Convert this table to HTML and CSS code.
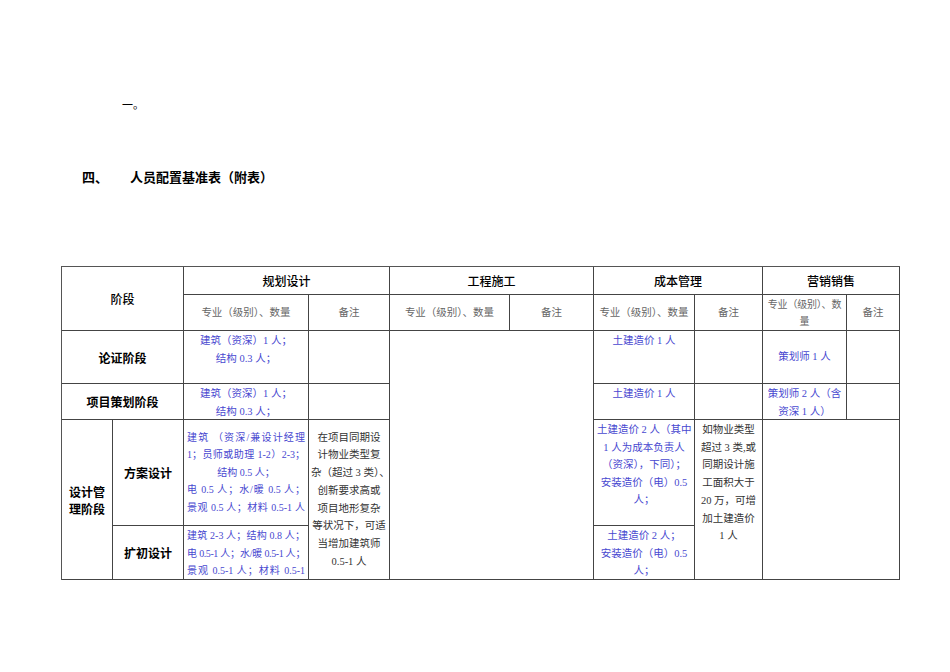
FILE: index.html
```html
<!DOCTYPE html>
<html lang="zh-CN">
<head>
<meta charset="utf-8">
<link rel="stylesheet" href="styles.css">
</head>
<body>
<div class="page">
  <p class="frag">一。</p>
  <h2 class="title"><span class="num">四、</span><span>人员配置基准表（附表）</span></h2>
  <div class="grid">
    <div class="c hd stage">阶段</div>
    <div class="c hd g2">规划设计</div>
    <div class="c hd g2">工程施工</div>
    <div class="c hd g2">成本管理</div>
    <div class="c hd g2">营销销售</div>

    <div class="c sub">专业（级别）、数量</div>
    <div class="c sub">备注</div>
    <div class="c sub">专业（级别）、数量</div>
    <div class="c sub">备注</div>
    <div class="c sub">专业（级别）、数量</div>
    <div class="c sub">备注</div>
    <div class="c sub narrow"><span class="nw">专业（级别）、数</span><span>量</span></div>
    <div class="c sub">备注</div>

    <div class="c hd lab g2">论证阶段</div>
    <div class="c bl top"><div class="ln">建筑（资深）1 人；</div><div class="ln">结构 0.3 人；</div></div>
    <div class="c"></div>
    <div class="c eng"></div>
    <div class="c bl top"><div class="ln">土建造价 1 人</div></div>
    <div class="c"></div>
    <div class="c bl mid"><div class="ln">策划师 1 人</div></div>
    <div class="c"></div>

    <div class="c hd lab g2">项目策划阶段</div>
    <div class="c bl top"><div class="ln">建筑（资深）1 人；</div><div class="ln">结构 0.3 人；</div></div>
    <div class="c"></div>
    <div class="c bl top"><div class="ln">土建造价 1 人</div></div>
    <div class="c"></div>
    <div class="c bl top"><div class="ln">策划师 2 人（含</div><div class="ln">资深 1 人）</div></div>
    <div class="c"></div>

    <div class="c hd lab dm">设计管<br>理阶段</div>
    <div class="c hd lab">方案设计</div>
    <div class="c bl mid fa">
      <div class="ln j">建筑 （资深/兼设计经理</div>
      <div class="ln j">1；员师或助理 1-2）2-3；</div>
      <div class="ln">结构 0.5 人；</div>
      <div class="ln j">电 0.5 人；水/暖 0.5 人；</div>
      <div class="ln j">景观 0.5 人；材料 0.5-1 人</div>
    </div>
    <div class="c note mid r2">
      <div class="ln">在项目同期设</div>
      <div class="ln">计物业类型复</div>
      <div class="ln">杂（超过 3 类）、</div>
      <div class="ln">创新要求高或</div>
      <div class="ln">项目地形复杂</div>
      <div class="ln">等状况下，可适</div>
      <div class="ln">当增加建筑师</div>
      <div class="ln">0.5-1 人</div>
    </div>
    <div class="c bl top">
      <div class="ln">土建造价 2 人（其中</div>
      <div class="ln">1 人为成本负责人</div>
      <div class="ln">（资深），下同）；</div>
      <div class="ln">安装造价（电）0.5</div>
      <div class="ln">人；</div>
    </div>
    <div class="c note top r2">
      <div class="ln">如物业类型</div>
      <div class="ln">超过 3 类,或</div>
      <div class="ln">同期设计施</div>
      <div class="ln">工面积大于</div>
      <div class="ln">20 万，可增</div>
      <div class="ln">加土建造价</div>
      <div class="ln">1 人</div>
    </div>
    <div class="c mk"></div>

    <div class="c hd lab">扩初设计</div>
    <div class="c bl top fa">
      <div class="ln j">建筑 2-3 人；结构 0.8 人；</div>
      <div class="ln j tight">电 0.5-1 人；水/暖 0.5-1 人；</div>
      <div class="ln j">景观 0.5-1 人；材料 0.5-1</div>
    </div>
    <div class="c bl top">
      <div class="ln">土建造价 2 人；</div>
      <div class="ln">安装造价（电）0.5</div>
      <div class="ln">人；</div>
    </div>
  </div>
</div>
</body>
</html>
```

FILE: styles.css
```css
html, body {
  margin: 0;
  padding: 0;
  background: #fff;
}

.page {
  padding: 96px 0 0 61px;
  font-family: "Liberation Serif", "Noto Sans CJK SC", serif;
  color: #000;
}

.frag {
  margin: 0 0 0 61px;
  font-size: 11px;
  line-height: 18px;
}

.title {
  margin: 54px 0 0 21px;
  display: flex;
  font-family: "Noto Sans CJK SC", sans-serif;
  font-size: 13px;
  font-weight: 700;
  line-height: 18px;
}

.title .num {
  width: 48px;
}

.grid {
  margin-top: 80px;
  display: grid;
  grid-template-columns: 51px 71px 125px 81px 120px 84px 101px 68px 84px 53px;
  grid-template-rows: 28px 36px 53px 36px 106px 54px;
  width: 838px;
  border-top: 1px solid #555;
  border-left: 1px solid #555;
}

.c {
  border-right: 1px solid #444;
  border-bottom: 1px solid #444;
  overflow: hidden;
  min-width: 0;
}

.hd {
  display: flex;
  align-items: center;
  justify-content: center;
  text-align: center;
  font-family: "Noto Sans CJK SC", sans-serif;
  font-size: 12px;
  font-weight: 500;
  line-height: 17px;
}

.stage {
  grid-column: span 2;
  grid-row: span 2;
}

.g2 {
  grid-column: span 2;
}

.sub {
  display: flex;
  align-items: center;
  justify-content: center;
  text-align: center;
  color: #666;
  font-size: 10.5px;
  line-height: 17px;
  padding: 0 3px;
}

.sub.narrow {
  flex-direction: column;
  padding: 0;
  font-size: 10px;
  letter-spacing: -0.2px;
}

.nw {
  white-space: nowrap;
}

.lab {
  font-weight: 700;
}

.dm {
  grid-row: span 2;
}

.eng {
  grid-column: span 2;
  grid-row: span 4;
}

.mk {
  grid-column: span 2;
  grid-row: span 2;
}

.r2 {
  grid-row: span 2;
}

.bl {
  color: #4848d0;
  font-size: 10.5px;
  line-height: 17.5px;
  text-align: center;
  padding: 0 3px;
}

.note {
  color: #333;
  font-size: 10.5px;
  line-height: 17.7px;
  text-align: center;
  padding: 0 2px;
}

.top {
  display: flex;
  flex-direction: column;
  justify-content: flex-start;
  padding-top: 1px;
}

.mid {
  display: flex;
  flex-direction: column;
  justify-content: center;
}

.fa {
  padding-left: 3px;
  padding-right: 3px;
  font-size: 10px;
}

.ln {
  white-space: nowrap;
}

.ln.j {
  text-align: justify;
  text-align-last: justify;
}

.ln.tight {
  letter-spacing: -0.4px;
}
```
